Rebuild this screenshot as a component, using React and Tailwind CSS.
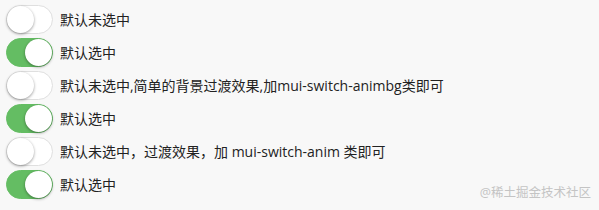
import React from 'react';

const rows = [
    { on: false, label: '默认未选中' },
    { on: true, label: '默认选中' },
    { on: false, label: '默认未选中,简单的背景过渡效果,加mui-switch-animbg类即可' },
    { on: true, label: '默认选中' },
    { on: false, label: '默认未选中，过渡效果，加 mui-switch-anim 类即可' },
    { on: true, label: '默认选中' },
];

const Switch = ({ on }) => (
    <div
        className={
            'relative w-[47px] h-[29px] rounded-full border flex items-center shrink-0 ' +
            (on ? 'bg-[#64bd63] border-[#64bd63] justify-end' : 'bg-white border-[#dfdfdf] justify-start')
        }
    >
        <div className="w-[27px] h-[27px] rounded-full bg-white shadow-[0_1px_3px_rgba(0,0,0,0.4)]" />
    </div>
);

const App = () => {
    return (
        <div
            className="relative w-[599px] h-[210px] bg-[#f8f8f8] overflow-hidden"
            style={{ fontFamily: '"Open Sans", "Noto Sans CJK SC", sans-serif' }}
        >
            <div className="flex flex-col gap-[4px] pt-[5px] pl-[6px]">
                {rows.map((r, i) => (
                    <div key={i} className="flex items-center h-[29px] gap-[7px]">
                        <Switch on={r.on} />
                        <span className="text-[14px] text-[#222]">{r.label}</span>
                    </div>
                ))}
            </div>
            <div className="absolute right-[8px] bottom-[7px] text-[12.5px] text-[#c4c4c4]">
                @稀土掘金技术社区
            </div>
        </div>
    );
};

export default App;
